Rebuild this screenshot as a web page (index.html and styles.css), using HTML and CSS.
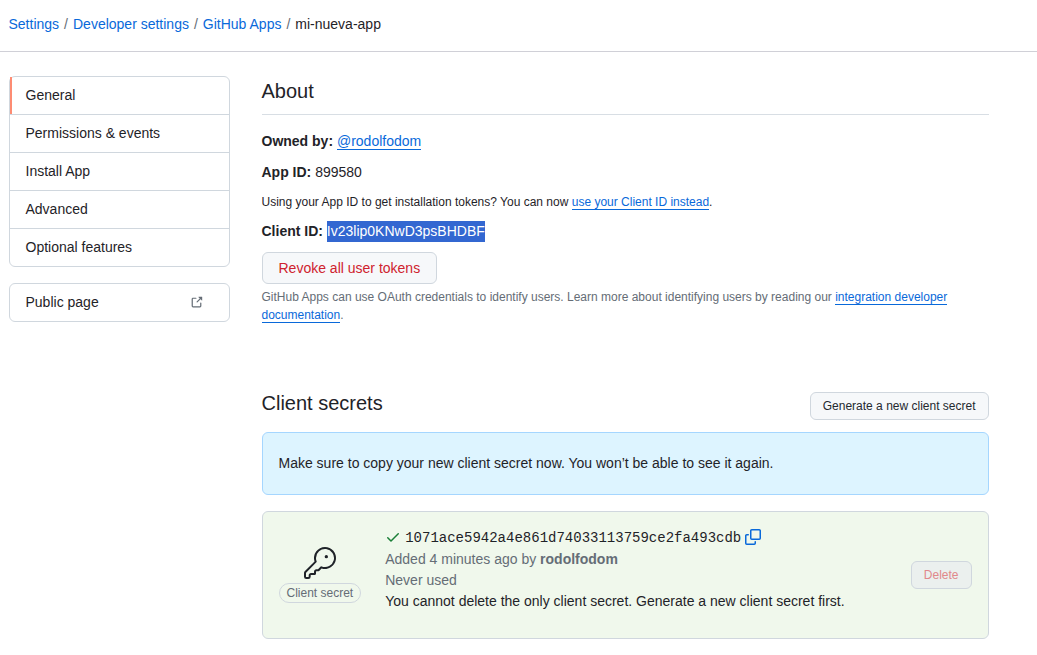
FILE: index.html
```html
<!DOCTYPE html>
<html lang="en">
<head>
<meta charset="utf-8">
<title>mi-nueva-app</title>
<link rel="stylesheet" href="styles.css">
</head>
<body>
<header class="crumbs">
  <a href="#">Settings</a><span class="sep">/</span><a href="#">Developer settings</a><span class="sep">/</span><a href="#">GitHub Apps</a><span class="sep">/</span><span>mi-nueva-app</span>
</header>
<div class="layout">
  <aside class="sidebar">
    <nav class="menu">
      <a class="item selected" href="#">General</a>
      <a class="item" href="#">Permissions &amp; events</a>
      <a class="item" href="#">Install App</a>
      <a class="item" href="#">Advanced</a>
      <a class="item" href="#">Optional features</a>
    </nav>
    <nav class="menu">
      <a class="item" href="#">Public page
        <svg class="external" viewBox="0 0 16 16"><path d="M3.75 2h3.5a.75.75 0 0 1 0 1.5h-3.5a.25.25 0 0 0-.25.25v8.5c0 .138.112.25.25.25h8.5a.25.25 0 0 0 .25-.25v-3.5a.75.75 0 0 1 1.5 0v3.5A1.75 1.75 0 0 1 12.25 14h-8.5A1.75 1.75 0 0 1 2 12.25v-8.5C2 2.784 2.784 2 3.75 2Zm6.854-1h4.146a.25.25 0 0 1 .25.25v4.146a.25.25 0 0 1-.427.177L13.03 4.03 9.28 7.78a.751.751 0 0 1-1.042-.018.751.751 0 0 1-.018-1.042l3.75-3.75-1.543-1.543A.25.25 0 0 1 10.604 1Z"/></svg>
      </a>
    </nav>
  </aside>
  <main class="content">
    <h2 class="title">About</h2>
    <p class="row"><b>Owned by:</b> <a class="link" href="#">@rodolfodom</a></p>
    <p class="row"><b>App ID:</b> 899580</p>
    <p class="hint">Using your App ID to get installation tokens? You can now <a class="link" href="#">use your Client ID instead</a>.</p>
    <p class="client"><b>Client ID:</b> <span class="selection">Iv23lip0KNwD3psBHDBF</span></p>
    <button class="btn danger">Revoke all user tokens</button>
    <p class="note">GitHub Apps can use OAuth credentials to identify users. Learn more about identifying users by reading our <a class="link" href="#">integration developer documentation</a>.</p>
    <div class="secrets-head">
      <h2>Client secrets</h2>
      <button class="btn small">Generate a new client secret</button>
    </div>
    <div class="flash">Make sure to copy your new client secret now. You won’t be able to see it again.</div>
    <section class="secret">
      <div class="kind">
        <svg class="key" viewBox="0 0 24 24"><path d="M16.75 8.5a1.25 1.25 0 1 0 0-2.5 1.25 1.25 0 0 0 0 2.5Z"/><path d="M15.75 0a8.25 8.25 0 1 1-2.541 16.101l-1.636 1.636a1.744 1.744 0 0 1-1.237.513H9.25a.25.25 0 0 0-.25.25v1.448a.876.876 0 0 1-.256.619l-.214.213a.75.75 0 0 1-.545.22H5.25a.25.25 0 0 0-.25.25v1A1.75 1.75 0 0 1 3.25 24h-1.5A1.75 1.75 0 0 1 0 22.25v-2.836c0-.464.185-.908.513-1.236l7.386-7.388A8.249 8.249 0 0 1 15.75 0ZM9 8.25a6.733 6.733 0 0 0 .463 2.462.75.75 0 0 1-.168.804l-7.722 7.721a.25.25 0 0 0-.073.177v2.836c0 .138.112.25.25.25h1.5a.25.25 0 0 0 .25-.25v-1c0-.966.784-1.75 1.75-1.75H7.5v-1c0-.966.784-1.75 1.75-1.75h1.086a.25.25 0 0 0 .177-.073l1.971-1.972a.75.75 0 0 1 .804-.168A6.75 6.75 0 1 0 9 8.25Z"/></svg>
        <span class="label">Client secret</span>
      </div>
      <div class="details">
        <div class="token">
          <svg class="check" viewBox="0 0 16 16"><path d="M13.78 4.22a.75.75 0 0 1 0 1.06l-7.25 7.25a.75.75 0 0 1-1.06 0L2.22 9.28a.751.751 0 0 1 .018-1.042.751.751 0 0 1 1.042-.018L6 10.94l6.72-6.72a.75.75 0 0 1 1.06 0Z"/></svg>
          <code>1071ace5942a4e861d74033113759ce2fa493cdb</code>
          <svg class="copy" viewBox="0 0 16 16"><path d="M0 6.75C0 5.784.784 5 1.75 5h1.5a.75.75 0 0 1 0 1.5h-1.5a.25.25 0 0 0-.25.25v7.5c0 .138.112.25.25.25h7.5a.25.25 0 0 0 .25-.25v-1.5a.75.75 0 0 1 1.5 0v1.5A1.75 1.75 0 0 1 9.25 16h-7.5A1.75 1.75 0 0 1 0 14.25Z"/><path d="M5 1.75C5 .784 5.784 0 6.75 0h7.5C15.216 0 16 .784 16 1.75v7.5A1.75 1.75 0 0 1 14.25 11h-7.5A1.75 1.75 0 0 1 5 9.25Zm1.75-.25a.25.25 0 0 0-.25.25v7.5c0 .138.112.25.25.25h7.5a.25.25 0 0 0 .25-.25v-7.5a.25.25 0 0 0-.25-.25Z"/></svg>
        </div>
        <div class="muted">Added 4 minutes ago by <b>rodolfodom</b></div>
        <div class="muted">Never used</div>
        <div>You cannot delete the only client secret. Generate a new client secret first.</div>
      </div>
      <button class="btn small disabled" disabled>Delete</button>
    </section>
  </main>
</div>
</body>
</html>
```
FILE: styles.css
```css
* { box-sizing: border-box; }
body {
  margin: 0;
  background: #fff;
  color: #1f2328;
  font: 14px/21px "Liberation Sans", Arial, sans-serif;
}
h2, p { margin: 0; }
h2 { font-size: 20px; line-height: 30px; font-weight: 400; }
svg { fill: currentColor; flex: none; }
a { color: #0969da; text-decoration: none; }

.crumbs {
  height: 52px;
  padding: 14px 8.5px 0;
  border-bottom: 1px solid #d0d0d7;
}
.sep { padding: 0 5px; color: #656d76; }

.layout { display: flex; gap: 32px; padding: 24px 48.5px 0 8.5px; }
.sidebar { width: 221px; flex: none; }
.menu {
  margin-bottom: 16px;
  border: 1px solid #d0d7de;
  border-radius: 6px;
}
.item {
  display: flex;
  align-items: center;
  justify-content: space-between;
  height: 38px;
  padding: 0 25.5px 1px 16px;
  border-bottom: 1px solid #d0d7de;
  color: #1f2328;
}
.item:last-child { height: 37px; border-bottom: 0; }
.selected { box-shadow: inset 2px 0 0 #fd8c73; }
.external { width: 13px; height: 13px; color: #656d76; }

.content { flex: 1; min-width: 0; }
.title { height: 39px; border-bottom: 1px solid #d8dee4; margin-bottom: 16px; }
.row { margin-bottom: 10px; }
.hint { font-size: 12px; line-height: 18px; margin-bottom: 10px; }
.client { margin-bottom: 10px; }
.link { border-bottom: 1px solid #0969da; }
.selection { display: inline-block; background: #3367d1; color: #fff; }

.btn {
  display: block;
  height: 32px;
  padding: 0 16px;
  border: 1px solid #d0d7de;
  border-radius: 6px;
  background: #f6f8fa;
  color: #24292f;
  font: 14px/20px "Liberation Sans", Arial, sans-serif;
}
.danger { color: #cf222e; }
.small { height: 28px; padding: 0 12px; font-size: 12px; }
.disabled { background: #ebf0ee; color: #e1888b; }
.note { margin-top: 4px; font-size: 12px; line-height: 18px; color: #656d76; }

.secrets-head {
  display: flex;
  align-items: flex-end;
  justify-content: space-between;
  margin-top: 64px;
  padding-bottom: 12px;
}
.secrets-head h2 { margin-bottom: 2px; }
.flash {
  height: 63px;
  padding: 20px 16px;
  border: 1px solid #a5d6ff;
  border-radius: 6px;
  background: #ddf4ff;
}
.secret {
  display: flex;
  align-items: center;
  height: 128px;
  margin-top: 16px;
  padding: 0 16px;
  border: 1px solid #d0d7de;
  border-radius: 6px;
  background: #f0f8ec;
}
.kind { display: flex; flex-direction: column; align-items: center; margin-right: 24px; }
.key { width: 32px; height: 32px; margin-bottom: 4px; }
.label {
  padding: 0 7px;
  border: 1px solid #d0d7de;
  border-radius: 10px;
  color: #656d76;
  font-size: 12px;
  line-height: 18px;
}
.details { flex: 1; padding-bottom: 10px; }
.token { display: flex; align-items: center; gap: 4px; height: 21px; }
.token code { font: 14px/21px "Liberation Mono", monospace; }
.token svg { width: 16px; height: 16px; margin-bottom: 3px; }
.check { color: #1a7f37; }
.copy { color: #0969da; }
.muted { color: #656d76; }
```
